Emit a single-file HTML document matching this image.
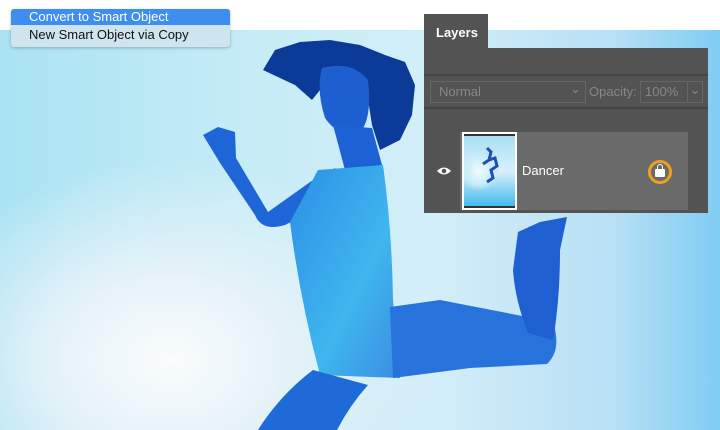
<!DOCTYPE html><html><head><style>
body{margin:0;width:720px;height:430px;overflow:hidden;position:relative;background:#fff;font-family:"Liberation Sans",sans-serif}
#bg{position:absolute;left:0;top:30px;width:720px;height:400px;background:radial-gradient(ellipse 260px 200px at 170px 330px,#fafcfd 0%,#e4f2f8 45%,rgba(200,235,248,0) 100%),linear-gradient(90deg,#a9e3f3 0%,#c6ecf6 35%,#d3eef8 60%,#b8e0f6 85%,#7fcdf3 100%)}
.menu{position:absolute;left:11px;top:9px;width:219px;height:38px;background:#cfe4ee;border-radius:3px;box-shadow:0 1px 3px rgba(0,0,0,.25)}
.m1{position:absolute;left:0;top:0;width:219px;height:16px;background:#3d8ef0;color:#fff;font-size:13px;line-height:16px;padding-left:18px;box-sizing:border-box;border-radius:3px 3px 0 0}
.m2{position:absolute;left:0;top:17px;font-size:13px;line-height:17px;padding-left:18px;color:#111}
.panel{position:absolute;left:424px;top:48px;width:284px;height:165px;background:#535353}
.tab{position:absolute;left:424px;top:14px;width:64px;height:36px;background:#535353;color:#fff;font-weight:bold;font-size:13px;line-height:38px;text-indent:12px}
.line{position:absolute;left:0;width:284px;height:2px;background:#444}
.ctl{position:absolute;border:1px solid #666;color:#888;font-size:13px;line-height:20px;height:22px;box-sizing:border-box}
.row{position:absolute;left:36px;top:84px;width:228px;height:78px;background:#6a6a6a}
</style></head><body>
<div id="bg"></div>
<svg style="position:absolute;left:0;top:0" width="720" height="430">
<defs><linearGradient id="tg" x1="0" y1="0" x2="1" y2="1"><stop offset="0" stop-color="#2b8fe6"/><stop offset=".6" stop-color="#3fb6ee"/><stop offset="1" stop-color="#3a8de2"/></linearGradient></defs>
<path d="M263 70 L275 50 L300 42 L330 40 L360 45 L385 55 L405 62 L415 85 L412 115 L400 140 L380 150 L372 125 L365 80 L335 70 L320 90 L312 100 L295 85 L280 78 Z" fill="#0b3a98"/>
<path d="M322 68 Q352 60 368 80 Q372 115 362 130 Q340 140 325 118 Q316 90 322 68 Z" fill="#1d5fd0"/>
<path d="M333 125 L372 128 L382 165 L345 170 Z" fill="#1d62d4"/>
<path d="M203 135 L218 127 L235 132 L236 158 L268 212 L313 180 L335 168 L345 195 L285 225 Q262 232 255 215 L220 163 Z" fill="#1e66d8"/>
<path d="M318 170 L383 165 Q392 230 393 300 L400 378 L320 375 Q300 300 290 222 Z" fill="url(#tg)"/>
<path d="M390 307 L440 300 L553 322 Q562 350 547 364 L470 368 L393 378 Z" fill="#2872dc"/>
<path d="M518 232 L540 222 L567 217 L560 250 Q560 300 553 340 L528 333 Q515 300 513 270 Z" fill="#1f5fd2"/>
<path d="M313 370 L368 385 Q350 405 337 430 L258 430 Q280 395 313 370 Z" fill="#1d6ad8"/>
</svg>
<div class="menu"><div class="m1">Convert to Smart Object</div><div class="m2">New Smart Object via Copy</div></div>
<div class="tab">Layers</div>
<div class="panel">
<div class="line" style="top:26px"></div>
<div class="ctl" style="left:6px;top:33px;width:156px;padding-left:8px">Normal<span style="position:absolute;right:4px;top:-3px">⌄</span></div>
<div style="position:absolute;left:165px;top:33px;color:#888;font-size:13px;line-height:22px">Opacity:</div>
<div class="ctl" style="left:216px;top:33px;width:48px;padding-left:4px">100%</div>
<div class="ctl" style="left:263px;top:33px;width:16px;text-align:center;line-height:16px">⌄</div>
<div class="line" style="top:59px"></div>
<div class="row"></div>
<svg style="position:absolute;left:12px;top:118px" width="16" height="10"><path d="M1 5 Q8 -2 15 5 Q8 12 1 5Z" fill="#fff"/><circle cx="8" cy="5" r="2.3" fill="#535353"/></svg>
<div style="position:absolute;left:38px;top:84px;width:55px;height:78px;border:2px solid #fff;box-sizing:border-box;background:#333"></div>
<div style="position:absolute;left:40px;top:88px;width:51px;height:70px;background:radial-gradient(circle at 15px 35px,#f4fbff 0,#cdeefa 12px,rgba(0,0,0,0) 20px),linear-gradient(180deg,#a8dff5,#d8f0fb 50%,#45b9ec)"></div>
<svg style="position:absolute;left:55px;top:98px" width="24" height="42"><path d="M8 2 L12 6 L10 14 L16 12 L18 20 L12 24 L14 32 L8 36 M10 14 L4 18" stroke="#1c4fb7" stroke-width="3" fill="none"/></svg>
<div style="position:absolute;left:98px;top:115px;color:#fff;font-size:13px">Dancer</div>
<div style="position:absolute;left:224px;top:112px;width:24px;height:24px;border:3px solid #f0a020;border-radius:50%;box-sizing:border-box"></div>
<div style="position:absolute;left:231px;top:121px;width:10px;height:8px;background:#fff;border-radius:1px"></div>
<div style="position:absolute;left:233px;top:116px;width:6px;height:6px;border:1.5px solid #fff;border-bottom:none;border-radius:3px 3px 0 0;box-sizing:border-box"></div>
</div>
</body></html>
